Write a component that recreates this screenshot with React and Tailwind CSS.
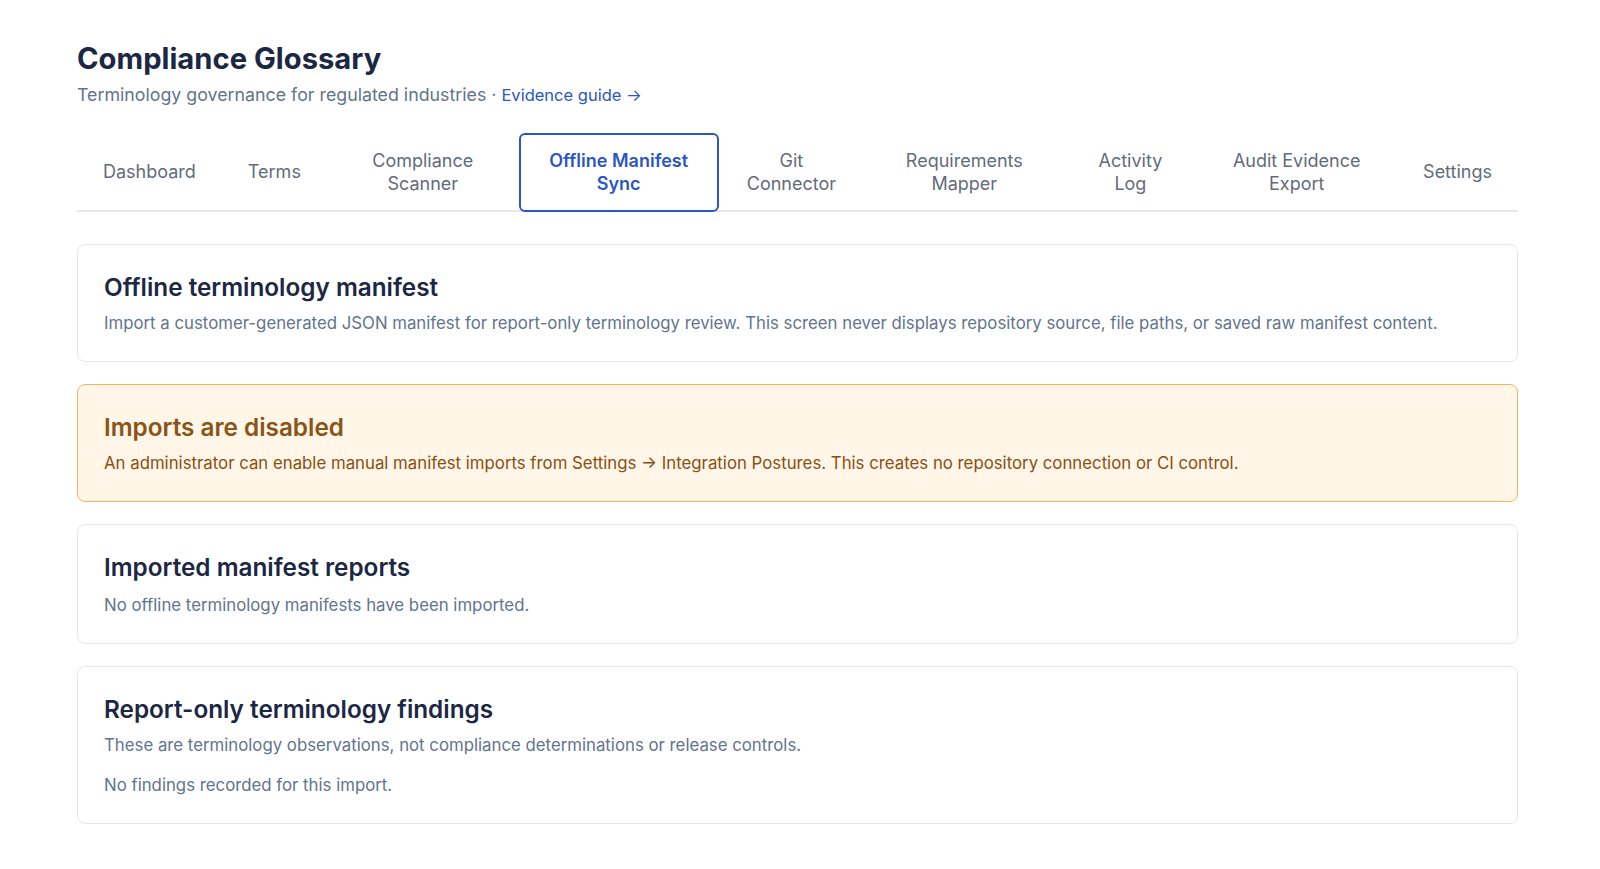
import React from 'react';

const tabs = [
  'Dashboard',
  'Terms',
  'Compliance Scanner',
  'Offline Manifest Sync',
  'Git Connector',
  'Requirements Mapper',
  'Activity Log',
  'Audit Evidence Export',
  'Settings',
];

function Card({ title, children, warn }) {
  return (
    <section
      className={
        warn
          ? 'rounded-lg border border-[#f0b462] bg-[#fff6e8] p-[26px]'
          : 'rounded-lg border border-gray-200 bg-white p-[26px]'
      }
    >
      <h2 className={warn ? 'text-[24.3px] leading-8 font-semibold text-[#8a5418]' : 'text-[24.3px] leading-8 font-semibold text-[#1c2744]'}>{title}</h2>
      {children}
    </section>
  );
}

export default function App() {
  const active = 'Offline Manifest Sync';

  return (
    <div className="min-h-screen bg-white font-['Inter',sans-serif] pl-[77px] pr-[82px] pt-10 pb-10">
      <h1 className="mt-px text-[29.2px] leading-9 font-bold text-[#1c2744]">Compliance Glossary</h1>
      <p className="mt-1 text-[17.8px] leading-7 text-slate-500">
        Terminology governance for regulated industries ·{' '}
        <a href="#" className="text-[16.5px] text-[#2a56c6]">Evidence guide →</a>
      </p>

      <nav className="mt-6 flex items-stretch border-b-2 border-gray-200">
        {tabs.map((t) => (
          <button
            key={t}
            className={
              t === active
                ? 'flex -mb-0.5 items-center justify-center rounded-md border-2 border-[#2c56c4] px-6 py-[15px] text-center text-lg leading-tight font-semibold text-[#2c56c4]'
                : 'flex -mb-0.5 items-center justify-center rounded-md border-2 border-transparent px-6 py-[15px] text-center text-lg leading-tight text-[#646b79]'
            }
          >
            {t}
          </button>
        ))}
      </nav>

      <div className="mt-8 flex flex-col gap-[22px]">
        <Card title="Offline terminology manifest">
          <p className="mt-2 text-[16.8px] leading-6 text-slate-500">
            Import a customer-generated JSON manifest for report-only terminology review. This screen never displays repository source, file paths, or saved raw manifest content.
          </p>
        </Card>

        <Card title="Imports are disabled" warn>
          <p className="mt-2 text-[16.8px] leading-6 text-[#8a4f12]">
            An administrator can enable manual manifest imports from Settings → Integration Postures. This creates no repository connection or CI control.
          </p>
        </Card>

        <Card title="Imported manifest reports">
          <p className="mt-2.5 text-[16.8px] leading-6 text-slate-500">No offline terminology manifests have been imported.</p>
        </Card>

        <Card title="Report-only terminology findings">
          <p className="mt-2 text-[16.8px] leading-6 text-slate-500">
            These are terminology observations, not compliance determinations or release controls.
          </p>
          <p className="mt-4 text-[16.8px] leading-6 text-slate-500">No findings recorded for this import.</p>
        </Card>
      </div>
    </div>
  );
}
